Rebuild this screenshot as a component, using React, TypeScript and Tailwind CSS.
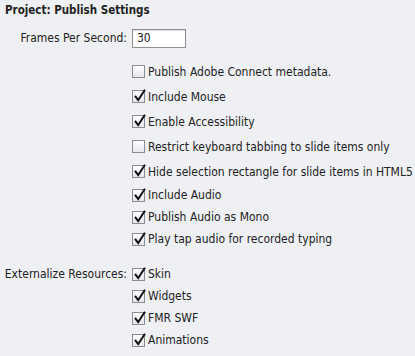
import React from 'react';

const Check = ({ checked }: { checked: boolean }) => (
  <span className="relative inline-block w-[13px] h-[13px] shrink-0 border border-[#8a8c92] bg-gradient-to-b from-[#ffffff] to-[#e4e6ec]">
    {checked && (
      <svg className="absolute left-[-1px] top-[-3px] overflow-visible" width="15" height="16" viewBox="0 0 15 16">
        <path d="M3.6 8.6 L6.2 12 L12.4 2.6" fill="none" stroke="#111" strokeWidth="2" strokeLinecap="square" strokeLinejoin="miter" />
      </svg>
    )}
  </span>
);

const Row = ({ label, checked, tall, side }: { label: string; checked: boolean; tall?: boolean; side?: string }) => (
  <div className={`grid grid-cols-[127px_1fr] items-center ${tall ? 'h-[25px]' : 'h-[22px]'}`}>
    <span className="text-right whitespace-nowrap">{side}</span>
    <label className="flex items-center gap-[3px] pl-[5px] whitespace-nowrap">
      <Check checked={checked} />
      <span>{label}</span>
    </label>
  </div>
);

const firstGroup = [
  { label: 'Publish Adobe Connect metadata.', checked: false },
  { label: 'Include Mouse', checked: true },
  { label: 'Enable Accessibility', checked: true },
  { label: 'Restrict keyboard tabbing to slide items only', checked: false },
  { label: 'Hide selection rectangle for slide items in HTML5', checked: true },
];

const secondGroup = [
  { label: 'Include Audio', checked: true },
  { label: 'Publish Audio as Mono', checked: true },
  { label: 'Play tap audio for recorded typing', checked: true },
];

const resources = ['Skin', 'Widgets', 'FMR SWF', 'Animations'];

export default function App() {
  return (
    <div className="w-[415px] h-[356px] overflow-hidden bg-[#eef0f4] text-[#222] text-[12px] font-['DejaVu_Sans_Condensed','DejaVu_Sans',sans-serif] select-none">
      {/* Header */}
      <div className="h-[21px] flex items-center pl-[5px] font-bold text-[11.5px]">Project: Publish Settings</div>

      {/* Frames per second */}
      <div className="mt-[7px] h-[20px] grid grid-cols-[127px_1fr] items-center">
        <span className="text-right whitespace-nowrap">Frames Per Second:</span>
        <div className="pl-[5px]">
          <div className="w-[54px] h-[19px] bg-white border border-[#8f8f8f] shadow-[inset_0_1px_1px_rgba(0,0,0,0.15)] pl-[4px] flex items-center">30</div>
        </div>
      </div>

      {/* Options */}
      <div className="mt-[11px]">
        {firstGroup.map((o) => (
          <Row key={o.label} label={o.label} checked={o.checked} tall />
        ))}
        {secondGroup.map((o) => (
          <Row key={o.label} label={o.label} checked={o.checked} />
        ))}
      </div>

      {/* Externalize */}
      <div className="mt-[13px]">
        {resources.map((r, i) => (
          <Row key={r} label={r} checked side={i === 0 ? 'Externalize Resources:' : ''} />
        ))}
      </div>
    </div>
  );
}
